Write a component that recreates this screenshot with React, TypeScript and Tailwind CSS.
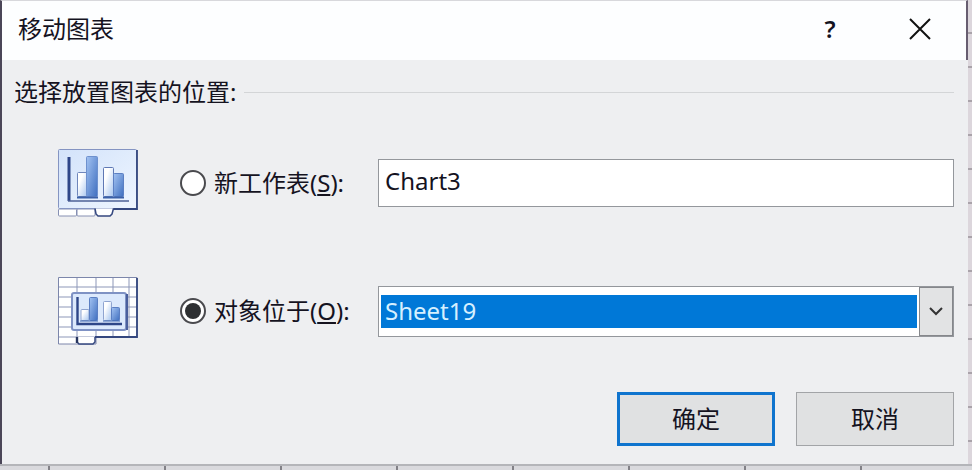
import { useRef, useState } from 'react';

type Placement = 'new-sheet' | 'object-in';

const SHEETS = ['Sheet19', 'Sheet18', 'Sheet17'];

function ChartSheetIcon() {
  return (
    <svg width="80" height="68" viewBox="0 0 80 68" fill="none" aria-hidden="true">
      <defs>
        <linearGradient id="sheet-panel" x1="0" y1="0" x2="1" y2="1">
          <stop offset="0" stopColor="#d3e3fa" />
          <stop offset="1" stopColor="#eef5ff" />
        </linearGradient>
        <linearGradient id="bar-blue" x1="0" y1="0" x2="1" y2="1">
          <stop offset="0" stopColor="#a3c3f2" />
          <stop offset="1" stopColor="#3f6fc0" />
        </linearGradient>
        <linearGradient id="bar-light" x1="0" y1="0" x2="1" y2="1">
          <stop offset="0.3" stopColor="#ffffff" />
          <stop offset="1" stopColor="#a5c4ef" />
        </linearGradient>
      </defs>
      <rect x="0.5" y="60" width="18" height="7" rx="1" fill="#fff" stroke="#8690b3" />
      <rect x="19" y="60" width="18" height="7" rx="1" fill="#fff" stroke="#8690b3" />
      <rect x="0.5" y="0.5" width="78" height="59" rx="1" fill="url(#sheet-panel)" stroke="#8494c2" />
      <path d="M79 1V60H55" stroke="#34477f" strokeWidth="1.8" />
      <path d="M37 59.5L38 65L40 67H52L54 65L55.5 59.5" fill="#fff" stroke="#34477f" strokeWidth="1.5" />
      <path d="M11 8V52" stroke="#2e4688" strokeWidth="3" />
      <path d="M10 52H71" stroke="#4c6096" strokeWidth="1.6" />
      <rect x="19.5" y="23.5" width="10" height="24" rx="1" fill="url(#bar-light)" stroke="#6f86bb" />
      <rect x="28.5" y="7.5" width="11" height="40" rx="1" fill="url(#bar-blue)" stroke="#6e91ce" />
      <rect x="45.5" y="18.5" width="10" height="29" rx="1" fill="url(#bar-light)" stroke="#5f78b4" />
      <rect x="55.5" y="24.5" width="10" height="23" rx="1" fill="url(#bar-blue)" stroke="#5b7fc3" />
      <path d="M19 48.5H40M45 48.5H66" stroke="#3a60a8" strokeWidth="2" />
    </svg>
  );
}

function ChartObjectIcon() {
  return (
    <svg width="80" height="68" viewBox="0 0 80 68" fill="none" aria-hidden="true">
      <path d="M0.5 0.5H79V60H38V67H0.5Z" fill="#fff" stroke="#7c86ab" />
      <path
        d="M1 10H79M1 20H79M1 30H79M1 40H79M1 50H79M1 60H38M19 1V60M38 1V60M55 1V60M71 1V60"
        stroke="#8d97b8"
      />
      <path d="M79 1V60H37" stroke="#34477f" strokeWidth="1.8" />
      <path d="M19 60V65L21 67H35L37 65V60" fill="#fff" stroke="#34477f" strokeWidth="1.5" />
      <path d="M19 60V66" stroke="#27355f" strokeWidth="2.4" />
      <rect x="14" y="16" width="54" height="37" rx="2" fill="#dce9fc" stroke="#7f92c4" strokeWidth="2" />
      <path d="M69 17V53" stroke="#4a5f9d" strokeWidth="2" />
      <path d="M19.5 20V47H64" stroke="#2e4688" strokeWidth="2.4" />
      <rect x="23" y="32.5" width="8" height="11" rx="1" fill="url(#bar-light)" stroke="#8fa4d0" />
      <rect x="31.5" y="20.5" width="8" height="23" rx="1" fill="url(#bar-blue)" stroke="#5b7fc3" />
      <rect x="45.5" y="24.5" width="8" height="19" rx="1" fill="url(#bar-light)" stroke="#8fa4d0" />
      <rect x="53.5" y="30.5" width="8" height="13" rx="1" fill="url(#bar-blue)" stroke="#5b7fc3" />
      <path d="M22 44H40M45 44H62" stroke="#4168b0" />
    </svg>
  );
}

const radioClass =
  'grid size-[26px] shrink-0 appearance-none place-items-center rounded-full border-2 border-[#4a4a4e] bg-white before:size-4 before:rounded-full checked:before:bg-[#2d2f31]';

export default function App() {
  const [placement, setPlacement] = useState<Placement>('object-in');
  const [chartName, setChartName] = useState('Chart3');
  const [sheet, setSheet] = useState(SHEETS[0]);
  const sheetRef = useRef<HTMLSelectElement>(null);

  return (
    <div className="bg-[#d9d9dd] font-['Noto_Sans','Noto_Sans_CJK_SC',sans-serif] text-2xl text-[#15131f]">
      <div className="flex">
        <form
          onSubmit={(e) => e.preventDefault()}
          className="min-w-0 flex-1 bg-[#eeeff1]"
        >
          <header className="flex h-[60px] items-center border-l-2 border-r-2 border-t border-l-[#4b4658] border-r-[#675d70] border-t-[#d8d8dc] bg-[#fdfeff] pb-1 pl-4 pr-[22px]">
            <h1 className="flex-1">移动图表</h1>
            <button type="button" aria-label="帮助" className="w-12 font-semibold">
              ?
            </button>
            <button type="button" aria-label="关闭" className="ml-[42px] flex h-12 w-12 items-center justify-center">
              <svg width="22" height="22" viewBox="0 0 22 22" stroke="#111" strokeWidth="2">
                <path d="M1 1L21 21M21 1L1 21" />
              </svg>
            </button>
          </header>

          <fieldset className="border-l-2 border-[#4b4658] pb-[18px] pl-3 pr-[14px] pt-4">
            <div className="flex items-center gap-2 leading-8">
              <span id="placement-label">选择放置图表的位置:</span>
              <span className="h-px flex-1 bg-[#d3d5d7]" />
            </div>

            <div
              role="radiogroup"
              aria-labelledby="placement-label"
              className="mt-10 grid grid-cols-[80px_180px_1fr] gap-x-[42px] gap-y-[58px] pl-11"
            >
              <div className="flex h-[70px] items-center">
                <ChartSheetIcon />
              </div>
              <label className="flex items-center gap-2 whitespace-nowrap">
                <input
                  type="radio"
                  name="placement"
                  checked={placement === 'new-sheet'}
                  onChange={() => setPlacement('new-sheet')}
                  className={radioClass}
                />
                <span>
                  新工作表(<u className="underline-offset-2">S</u>):
                </span>
              </label>
              <div className="-ml-6 flex items-center">
                <input
                  type="text"
                  aria-label="新工作表"
                  value={chartName}
                  onChange={(e) => setChartName(e.target.value)}
                  className="h-12 w-full border border-[#94979c] bg-white px-1.5 pb-1.5"
                />
              </div>

              <div className="flex h-[70px] items-center">
                <ChartObjectIcon />
              </div>
              <label className="flex items-center gap-2 whitespace-nowrap">
                <input
                  type="radio"
                  name="placement"
                  checked={placement === 'object-in'}
                  onChange={() => setPlacement('object-in')}
                  className={radioClass}
                />
                <span>
                  对象位于(<u className="underline-offset-2">O</u>):
                </span>
              </label>
              <div className="-ml-6 flex items-center">
                <div className="flex h-[51px] w-full border border-[#94979c] bg-white">
                  <select
                    ref={sheetRef}
                    aria-label="对象位于"
                    value={sheet}
                    onChange={(e) => setSheet(e.target.value)}
                    className="my-2 mx-0.5 min-w-0 flex-1 appearance-none bg-[#0078d7] px-1 leading-8 text-[#d5f0ff]"
                  >
                    {SHEETS.map((name) => (
                      <option key={name}>{name}</option>
                    ))}
                  </select>
                  <button
                    type="button"
                    aria-label="展开列表"
                    onClick={() => sheetRef.current?.showPicker()}
                    className="flex w-[34px] items-center justify-center border border-[#85878b] bg-[#e2e3e4]"
                  >
                    <svg width="14" height="9" viewBox="0 0 14 9" fill="none" stroke="#333" strokeWidth="2">
                      <path d="M1 1L7 7L13 1" />
                    </svg>
                  </button>
                </div>
              </div>
            </div>

            <div className="mt-[46px] flex justify-end gap-[21px]">
              <button type="submit" className="h-[54px] w-[158px] border-3 border-[#0f74ce] bg-[#e0e1e2]">
                确定
              </button>
              <button type="button" className="h-[54px] w-[158px] border border-[#a2a4a7] bg-[#e0e1e2]">
                取消
              </button>
            </div>
          </fieldset>
        </form>

        {/* worksheet row edges beside the dialog */}
        <div className="relative w-1 overflow-hidden bg-[#dcd6dc]" aria-hidden="true">
          <div className="absolute inset-0">
            {Array.from({ length: 14 }, (_, i) => (
              <div key={i} className="h-[34px] border-b-2 border-[#aaa3aa]" />
            ))}
          </div>
        </div>
      </div>

      {/* worksheet column edges below the dialog */}
      <div className="flex h-1.5 overflow-hidden border-t-2 border-[#b4b5b9]" aria-hidden="true">
        <div className="w-[50px] shrink-0 border-r-2 border-[#828187]" />
        {Array.from({ length: 8 }, (_, i) => (
          <div key={i} className="w-[116px] shrink-0 border-r-2 border-[#828187]" />
        ))}
      </div>
    </div>
  );
}
